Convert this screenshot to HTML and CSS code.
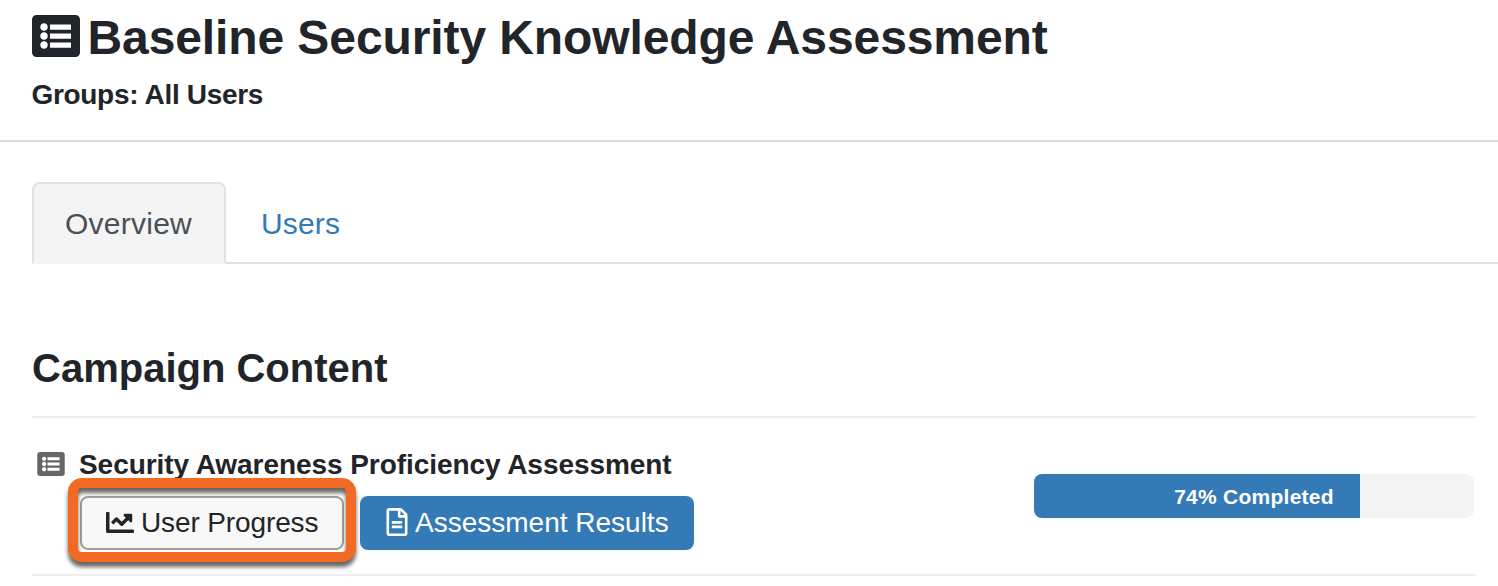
FILE: index.html
```
<!DOCTYPE html>
<html lang="en">
<head>
<meta charset="utf-8">
<title>Baseline Security Knowledge Assessment</title>
<link rel="stylesheet" href="styles.css">
</head>
<body>
<svg class="sprite" aria-hidden="true">
  <symbol id="list-alt" viewBox="0 32 512 448"><path d="M464 480H48c-26.510 0-48-21.490-48-48V80c0-26.510 21.490-48 48-48h416c26.510 0 48 21.490 48 48v352c0 26.510-21.490 48-48 48zM128 120c-22.091 0-40 17.909-40 40s17.909 40 40 40 40-17.909 40-40-17.909-40-40-40zm0 96c-22.091 0-40 17.909-40 40s17.909 40 40 40 40-17.909 40-40-17.909-40-40-40zm0 96c-22.091 0-40 17.909-40 40s17.909 40 40 40 40-17.909 40-40-17.909-40-40-40zM192 132v56h224v-56zM192 228v56h224v-56zM192 324v56h224v-56z" fill-rule="evenodd"/></symbol>
</svg>
<header class="page-header">
  <h1 class="title"><svg class="title-icon"><use href="#list-alt"/></svg><span>Baseline Security Knowledge Assessment</span></h1>
  <p class="groups">Groups: All Users</p>
</header>
<nav class="tabs">
  <a class="tab tab-active">Overview</a>
  <a class="tab">Users</a>
</nav>
<main class="content">
  <h2 class="section-title">Campaign Content</h2>
  <div class="row">
    <svg class="row-icon"><use href="#list-alt"/></svg>
    <div class="row-body">
      <h3 class="row-title">Security Awareness Proficiency Assessment</h3>
      <div class="actions">
        <div class="highlighted">
          <a class="btn btn-light"><svg class="chart-icon" viewBox="0 64 512 384"><path d="M496 384H64V80c0-8.840-7.160-16-16-16H16C7.160 64 0 71.160 0 80v336c0 17.670 14.330 32 32 32h464c8.840 0 16-7.160 16-16v-32c0-8.840-7.160-16-16-16zM464 96H345.940c-21.380 0-32.090 25.850-16.970 40.970l32.400 32.400L288 242.750l-73.370-73.370c-12.500-12.500-32.760-12.500-45.250 0l-68.690 68.690c-6.250 6.250-6.250 16.380 0 22.630l22.620 22.620c6.250 6.250 16.380 6.250 22.630 0L192 237.250l73.370 73.370c12.500 12.500 32.760 12.500 45.250 0l96-96 32.400 32.400c15.120 15.120 40.970 4.410 40.970-16.970V112c.01-8.840-7.150-16-15.990-16z"/></svg><span>User Progress</span></a>
          <span class="callout"></span>
        </div>
        <a class="btn btn-primary"><svg class="file-icon" viewBox="0 0 384 512"><path d="M288 248v28c0 6.600-5.400 12-12 12H108c-6.600 0-12-5.400-12-12v-28c0-6.600 5.400-12 12-12h168c6.600 0 12 5.400 12 12zm-12 72H108c-6.600 0-12 5.400-12 12v28c0 6.600 5.400 12 12 12h168c6.600 0 12-5.400 12-12v-28c0-6.600-5.400-12-12-12zm108-188.100V464c0 26.500-21.500 48-48 48H48c-26.500 0-48-21.500-48-48V48C0 21.500 21.500 0 48 0h204.100C264.800 0 277 5.100 286 14.100L369.900 98c9 8.900 14.100 21.200 14.100 33.900zm-128-80V128h76.100L256 51.900zM336 464V176H232c-13.300 0-24-10.700-24-24V48H48v416h288z"/></svg><span>Assessment Results</span></a>
      </div>
    </div>
    <div class="progress"><div class="progress-fill" style="width:74%"></div><span class="progress-label">74% Completed</span></div>
  </div>
</main>
</body>
</html>
```
FILE: styles.css
```
* { box-sizing: border-box; }
body {
  margin: 0;
  background: #fff;
  color: #212529;
  font-family: "Liberation Sans", Arial, sans-serif;
  overflow: hidden;
}
h1, h2, h3, p { margin: 0; font-weight: 700; }
svg { display: block; flex: none; fill: currentColor; }
.sprite { display: none; }

.page-header {
  height: 142px;
  padding: 10px 32px 0 32px;
  border-bottom: 2px solid #dedede;
}
.title {
  display: flex;
  gap: 7.500px;
  font-size: 48px;
  line-height: 56px;
  letter-spacing: -0.1px;
  white-space: nowrap;
}
.title-icon { width: 48px; height: 42px; margin-top: 5px; }
.groups {
  margin: 13px 0 0 -0.5px;
  font-size: 28px;
  line-height: 32px;
  letter-spacing: -0.32px;
}

.tabs {
  display: flex;
  margin: 40px 0 0 32px;
  height: 82px;
  box-shadow: inset 0 -2px #dee2e6;
}
.tab {
  padding: 0 35px;
  font-size: 30px;
  line-height: 84px;
  letter-spacing: 0.15px;
  color: #337ab7;
}
.tab-active {
  width: 194px;
  padding: 0 0 0 31px;
  line-height: 80px;
  letter-spacing: 0.25px;
  color: #495057;
  background: #f4f4f4;
  border: 2px solid #dee2e6;
  border-bottom-color: #f4f4f4;
  border-radius: 8px 8px 0 0;
}

.content { padding: 80px 22px 0 32px; }
.section-title {
  height: 74px;
  border-bottom: 2px solid #eee;
  font-size: 40px;
  line-height: 48px;
}
.row {
  display: flex;
  height: 158px;
  padding: 30px 2px 0 5px;
  border-bottom: 2px solid #eee;
}
.row-icon { width: 28px; height: 24px; margin: 4px 14px 0 0; color: #666; }
.row-body { flex: 1; }
.row-title {
  padding-top: 1px;
  font-size: 28px;
  line-height: 32px;
  letter-spacing: -0.06px;
}
.actions { display: flex; gap: 16px; margin: 15px 0 0 1px; }
.highlighted { position: relative; }
.btn {
  display: flex;
  align-items: center;
  height: 54px;
  border-radius: 8px;
  font-size: 28px;
  line-height: 32px;
  white-space: nowrap;
}
.btn-light {
  width: 264px;
  padding-left: 24px;
  gap: 7px;
  letter-spacing: -0.12px;
  background: #f8f8f8;
  border: 2px solid #a0a0a0;
}
.btn-primary {
  width: 334px;
  padding-left: 26px;
  gap: 7px;
  color: #fff;
  background: #337ab7;
}
.chart-icon { width: 28px; height: 21px; margin-bottom: 2px; }
.file-icon { width: 22px; height: 28px; margin-bottom: 2px; }
/* Frame drawn around the highlighted button */
.callout {
  position: absolute;
  inset: -18px -12px -12px -12px;
  border: 10px solid #f36a24;
  border-radius: 14px;
  filter: drop-shadow(0 5px 2px rgba(0, 0, 0, 0.6));
}

.progress {
  display: grid;
  width: 440px;
  height: 44px;
  margin-top: 26px;
  border-radius: 8px;
  background: #f4f4f4;
  overflow: hidden;
}
.progress-fill { grid-area: 1 / 1; background: #337ab7; }
.progress-label {
  grid-area: 1 / 1;
  text-align: center;
  color: #fff;
  font-size: 21px;
  font-weight: 700;
  line-height: 45px;
  letter-spacing: 0.25px;
}
```
